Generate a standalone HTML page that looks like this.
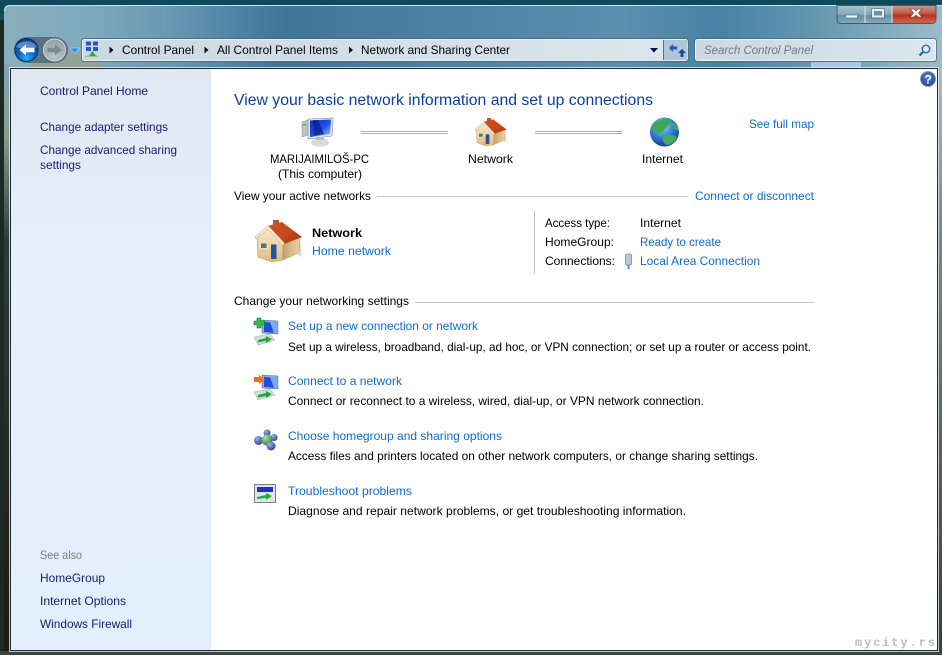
<!DOCTYPE html>
<html><head><meta charset="utf-8"><style>
html,body{margin:0;padding:0;background:#fff}
svg{display:block}
text{font-family:"Liberation Sans",sans-serif;font-size:12px;fill:#000;white-space:pre}
.l{fill:#0f6bd0}
.n{fill:#1a1a6e}
</style></head><body>
<svg width="942" height="655" viewBox="0 0 942 655" xmlns="http://www.w3.org/2000/svg">
<defs>
<linearGradient id="glass" x1="0" y1="0" x2="1" y2="0">
<stop offset="0" stop-color="#8aaebd"/><stop offset=".09" stop-color="#7fa9bf"/><stop offset=".17" stop-color="#6a9ab4"/><stop offset=".3" stop-color="#3f7498"/><stop offset=".36" stop-color="#46799b"/><stop offset=".5" stop-color="#4f83a3"/><stop offset=".66" stop-color="#5c8fac"/><stop offset=".76" stop-color="#4682a5"/><stop offset=".86" stop-color="#6396af"/><stop offset="1" stop-color="#9cbbc9"/>
</linearGradient>
<linearGradient id="leftb" x1="0" y1="0" x2="0" y2="1"><stop offset="0" stop-color="#7ea5b5"/><stop offset=".12" stop-color="#8c9c90"/><stop offset=".3" stop-color="#2c3c3c"/><stop offset="1" stop-color="#1c1a10"/></linearGradient>
<linearGradient id="rightb" x1="0" y1="0" x2="0" y2="1"><stop offset="0" stop-color="#a2becb"/><stop offset=".3" stop-color="#6c8a94"/><stop offset="1" stop-color="#3a3f3c"/></linearGradient>
<linearGradient id="addr" x1="0" y1="0" x2="1" y2="0"><stop offset="0" stop-color="#ccd9e2"/><stop offset="1" stop-color="#dbe6ed"/></linearGradient>
<linearGradient id="side" x1="0" y1="0" x2="0" y2="1"><stop offset="0" stop-color="#dfe8f3"/><stop offset=".3" stop-color="#e6eff9"/><stop offset="1" stop-color="#e3effc"/></linearGradient>
<linearGradient id="close" x1="0" y1="0" x2="0" y2="1"><stop offset="0" stop-color="#c9958a"/><stop offset=".4" stop-color="#c25f4e"/><stop offset=".55" stop-color="#b8321c"/><stop offset="1" stop-color="#d0694e"/></linearGradient>
<linearGradient id="capb" x1="0" y1="0" x2="0" y2="1"><stop offset="0" stop-color="#a8c2ce"/><stop offset=".5" stop-color="#86a8ba"/><stop offset=".55" stop-color="#648fa6"/><stop offset="1" stop-color="#86abbc"/></linearGradient>
<radialGradient id="back" cx=".5" cy=".85" r=".8"><stop offset="0" stop-color="#2bb0f4"/><stop offset=".5" stop-color="#0a5cc4"/><stop offset="1" stop-color="#123c94"/></radialGradient>
<radialGradient id="fwd" cx=".5" cy=".8" r=".75"><stop offset="0" stop-color="#b9c5c8"/><stop offset="1" stop-color="#93a4aa"/></radialGradient>
<radialGradient id="globe" cx=".42" cy=".3" r=".8"><stop offset="0" stop-color="#8fd4f6"/><stop offset=".55" stop-color="#2a74cc"/><stop offset="1" stop-color="#0c2a78"/></radialGradient>
<radialGradient id="help" cx=".5" cy=".35" r=".7"><stop offset="0" stop-color="#5c84c8"/><stop offset="1" stop-color="#1f3f90"/></radialGradient>
<radialGradient id="ball" cx=".35" cy=".3" r=".8"><stop offset="0" stop-color="#9db0ec"/><stop offset="1" stop-color="#27378f"/></radialGradient>
<radialGradient id="ballg" cx=".35" cy=".3" r=".8"><stop offset="0" stop-color="#a8e0a0"/><stop offset="1" stop-color="#1f7a4a"/></radialGradient>
<linearGradient id="wall" x1="0" y1="0" x2="0" y2="1"><stop offset="0" stop-color="#fbeccb"/><stop offset="1" stop-color="#e0bb85"/></linearGradient>
<linearGradient id="wall2" x1="0" y1="0" x2="1" y2="0"><stop offset="0" stop-color="#c9a26c"/><stop offset="1" stop-color="#ecd2a4"/></linearGradient>
<linearGradient id="roof" x1="0" y1="0" x2="1" y2="1"><stop offset="0" stop-color="#cf5024"/><stop offset=".5" stop-color="#c64a1e"/><stop offset="1" stop-color="#a83412"/></linearGradient>
<linearGradient id="scr" x1="0" y1="0" x2="1" y2="1"><stop offset="0" stop-color="#0b2fc0"/><stop offset=".55" stop-color="#1f52e0"/><stop offset="1" stop-color="#a9c4f4"/></linearGradient>
<g id="house">
<path d="M50 24 L52 40 L48 42Z" fill="#ddd"/>
<path d="M7 23 L18.500 12.500 L33 28 L33 45 L22 47 L8 42Z" fill="url(#wall)" stroke="#b58c58" stroke-width=".5"/>
<path d="M33 28 L50 23 L49 38 L33 45Z" fill="url(#wall2)" stroke="#b58c58" stroke-width=".4"/>
<rect x="23" y="5" width="6" height="5" fill="#a85a38"/>
<path d="M18 11 L32 7 L52 22 L34 29Z" fill="url(#roof)"/>
<path d="M5 22 L18 10.500 L34.500 28 L33 30.500 L18 14.500 L6 24Z" fill="#f4e8d0" stroke="#b89868" stroke-width=".4"/>
<rect x="10.500" y="28" width="6.500" height="5.500" fill="#5c6c7c" stroke="#f7f0e0" stroke-width=".8"/>
<rect x="21" y="29.500" width="5.500" height="14.500" fill="#23559c"/>
<rect x="21" y="44" width="6" height="2" fill="#e4c23c"/>
</g>
<g id="netcomp">
<path d="M9 2 L25 3 L25 16 L9 15Z" fill="#8ea8d8" stroke="#5c6c8c" stroke-width=".5"/>
<path d="M11 4 L24 5 L24 15 L11 14Z" fill="#1f4fd8"/>
<path d="M17 4 L24 5 L24 15 L21 15Z" fill="#7fa8ee"/>
<path d="M1 19 L17 16 L22 22 L5 27Z" fill="#d6dcdc" stroke="#8a9494" stroke-width=".4"/>
<path d="M5 22 L13 20 L13 18 L19 21 L13 25 L13 23 L5 24.500Z" fill="#1fa83f"/>
</g>
</defs>

<!-- outer background -->
<rect width="942" height="655" fill="#0f4a5c"/>
<!-- aero glass -->
<path d="M4 11 Q4 5 10 5 H942 V655 H4Z" fill="url(#glass)"/>
<rect x="0" y="20" width="4" height="635" fill="#1d2a24"/>
<rect x="4" y="64" width="6" height="591" fill="url(#leftb)"/>
<path d="M4.500 11 Q4.500 5.500 10 5.500 H942" fill="none" stroke="#d4e2e8" stroke-width="1"/>
<path d="M28 68 Q58 36 105 68Z" fill="#a09c78" opacity=".6"/>
<rect x="811" y="62" width="50" height="7" fill="#a6c8e6"/>
<rect x="0" y="651" width="942" height="4" fill="#3a4440"/>
<rect x="938" y="69" width="4" height="582" fill="url(#rightb)"/>

<!-- caption buttons -->
<path d="M837 5.500 H936 V19 Q936 23.500 931 23.500 H842 Q837 23.500 837 19Z" fill="url(#capb)" stroke="#3e5c6c" stroke-width="1"/>
<path d="M892 6 H935.500 V19 Q935.500 23 931 23 H892Z" fill="url(#close)"/>
<line x1="865" y1="6" x2="865" y2="23" stroke="#dfe9ee" stroke-width="1"/>
<line x1="892" y1="6" x2="892" y2="23" stroke="#dfe9ee" stroke-width="1"/>
<rect x="845.500" y="15" width="12" height="3" fill="#f4f6f8" stroke="#4c5e70" stroke-width=".6"/>
<rect x="873" y="10" width="10" height="6.500" fill="#6c8ea4" stroke="#e6ecf0" stroke-width="2"/>
<rect x="871.500" y="8.500" width="13" height="9.500" fill="none" stroke="#4a6274" stroke-width=".5"/>
<path d="M910 9 H914 L916 11 L918 9 H922 L918.500 13 L922 17 H918 L916 15 L914 17 H910 L913.500 13Z" fill="#f4f4f4" stroke="#6c3a34" stroke-width=".6"/>

<!-- nav buttons -->
<rect x="14" y="37" width="54" height="26" rx="13" fill="#4e6470" opacity=".8"/>
<circle cx="26.500" cy="50" r="11.500" fill="url(#back)" stroke="#0c2e6c" stroke-width="1"/>
<path d="M16 47 A11 8 0 0 1 37 47 Q27 51 16 47Z" fill="#b4d2f2" opacity=".45"/>
<path d="M19.500 50 L26 44.500 V47.800 H34.500 V52.200 H26 V55.500Z" fill="#fff"/>
<circle cx="54.500" cy="50" r="11" fill="url(#fwd)" stroke="#d0d8da" stroke-width="1"/>
<path d="M62 50 L55 44.500 V47.800 H47.500 V52.200 H55 V55.500Z" fill="#7d8b90"/>
<path d="M70 48 H79.500 L74.700 53Z" fill="#2d8fe4" stroke="#d8eaf6" stroke-width=".5"/>

<!-- address bar -->
<rect x="82.500" y="39.500" width="605" height="21" rx="2" fill="url(#addr)" stroke="#e8f0f4" stroke-width="1"/>
<rect x="81.500" y="38.500" width="607" height="23" rx="2.500" fill="none" stroke="#40667e" stroke-width=".7"/>
<rect x="664" y="40" width="23.500" height="20" fill="#adc6d5"/>
<line x1="663.500" y1="40" x2="663.500" y2="60" stroke="#5a7486" stroke-width="1"/>
<g fill="#2b55c2"><rect x="86" y="41.500" width="5" height="4"/><rect x="93" y="41.500" width="5" height="4"/><rect x="86" y="47" width="5" height="4"/><rect x="93" y="47" width="5" height="4"/></g>
<path d="M85 55.500 H99 V57 H85Z" fill="#9ac090"/><path d="M92.500 51 L96 56 H89Z" fill="#1faf4a"/>
<path d="M109.500 46.500 L113.500 50 L109.500 53.500Z" fill="#111"/>
<path d="M204.500 46.500 L208.500 50 L204.500 53.500Z" fill="#111"/>
<path d="M349 46.500 L353 50 L349 53.500Z" fill="#111"/>
<text x="122" y="54" textLength="72" lengthAdjust="spacingAndGlyphs">Control Panel</text>
<text x="217" y="54" textLength="121" lengthAdjust="spacingAndGlyphs">All Control Panel Items</text>
<text x="361" y="54" textLength="149" lengthAdjust="spacingAndGlyphs">Network and Sharing Center</text>
<path d="M650 48 H658 L654 52.500Z" fill="#0b0b50"/>
<path d="M669 48 L673 44 V46.500 H677 V49.500 H673 V52Z" fill="#2458b0"/>
<path d="M682 49 L686 53 H683.500 V57 H680.500 V53 H678Z" fill="#1a4aa8"/>
<!-- search -->
<rect x="695.500" y="39.500" width="240" height="21" rx="2" fill="url(#addr)" stroke="#edf3f6" stroke-width="1"/>
<rect x="694.500" y="38.500" width="242" height="23" rx="2.500" fill="none" stroke="#40667e" stroke-width=".7"/>
<text x="704" y="54" textLength="109" lengthAdjust="spacingAndGlyphs" style="font-style:italic;fill:#6e7b84">Search Control Panel</text>
<circle cx="926" cy="49" r="3.700" fill="#e6f0f8" stroke="#2472bc" stroke-width="1.500"/>
<line x1="923" y1="52" x2="919.500" y2="55.500" stroke="#1c5a9c" stroke-width="2"/>

<!-- client area -->
<rect x="9.500" y="67.500" width="929" height="584" fill="none" stroke="#f0f4f2" stroke-width="1" opacity=".75"/>
<rect x="10.500" y="68.500" width="927" height="582" fill="#fff" stroke="#1e2a2c" stroke-width="1"/>
<rect x="11" y="69" width="200" height="581" fill="url(#side)"/>

<!-- sidebar -->
<text class="n" x="40" y="95" textLength="108" lengthAdjust="spacingAndGlyphs">Control Panel Home</text>
<text class="n" x="40" y="131" textLength="128" lengthAdjust="spacingAndGlyphs">Change adapter settings</text>
<text class="n" x="40" y="154" textLength="137" lengthAdjust="spacingAndGlyphs">Change advanced sharing</text>
<text class="n" x="40" y="169" textLength="41" lengthAdjust="spacingAndGlyphs">settings</text>
<text x="40" y="559" textLength="42" lengthAdjust="spacingAndGlyphs" style="fill:#7d7d7d">See also</text>
<text class="n" x="40" y="582" textLength="65" lengthAdjust="spacingAndGlyphs">HomeGroup</text>
<text class="n" x="40" y="605" textLength="86" lengthAdjust="spacingAndGlyphs">Internet Options</text>
<text class="n" x="40" y="628" textLength="92" lengthAdjust="spacingAndGlyphs">Windows Firewall</text>

<!-- help -->
<circle cx="928" cy="79" r="7.500" fill="url(#help)" stroke="#8a9cb8" stroke-width="1"/>
<text x="924.500" y="83.500" style="font-size:12px;font-weight:bold;fill:#fff">?</text>

<!-- main -->
<text x="234" y="105" textLength="419" lengthAdjust="spacingAndGlyphs" style="font-size:16px;fill:#0a3ea6">View your basic network information and set up connections</text>
<text class="l" x="749" y="128" textLength="65" lengthAdjust="spacingAndGlyphs">See full map</text>

<!-- computer icon -->
<g>
<path d="M302 122 L308 120 V135 L302 137Z" fill="#bcc5ca" stroke="#858e94" stroke-width=".5"/>
<rect x="303" y="124" width="3" height="1.500" fill="#4caf50"/>
<path d="M308 119 L333 118 L332 136 L308 139Z" fill="#dfe7ee" stroke="#7c8a98" stroke-width=".6"/>
<path d="M310 120.500 L331 119.500 L330 134 L310 137Z" fill="url(#scr)"/>
<path d="M313 120 L318 120 L324 134 L314 135.500Z" fill="#0a1f96" opacity=".75"/>
<ellipse cx="320" cy="142.500" rx="9" ry="4" fill="#d8dbde"/>
<rect x="316" y="137" width="8" height="3" fill="#b8bec4"/>
</g>
<!-- connectors -->
<g stroke-width="1"><line x1="361" y1="131.500" x2="448" y2="131.500" stroke="#9ab4d0"/><line x1="361" y1="133.500" x2="448" y2="133.500" stroke="#9ab4d0"/><line x1="535" y1="131.500" x2="622" y2="131.500" stroke="#9ab4d0"/><line x1="535" y1="133.500" x2="622" y2="133.500" stroke="#9ab4d0"/></g>
<use href="#house" transform="translate(471.600,114.600) scale(.67)"/>
<!-- globe -->
<circle cx="664.500" cy="132" r="14.500" fill="url(#globe)"/>
<path d="M651 128 Q656 119 667 119 Q673 122 667 126 Q664 133 658 133 Q653 132 651 128Z" fill="#3ea858"/>
<path d="M662 137 Q671 133 677 137 Q674 145 666 145 Q662 141 662 137Z" fill="#43a860"/>
<path d="M673 122 Q678 126 679 131 Q674 130 672 125Z" fill="#43a860"/>
<text x="270" y="163" textLength="99" lengthAdjust="spacingAndGlyphs">MARIJAIMILOŠ-PC</text>
<text x="278" y="178" textLength="84" lengthAdjust="spacingAndGlyphs">(This computer)</text>
<text x="468" y="163" textLength="45" lengthAdjust="spacingAndGlyphs">Network</text>
<text x="642" y="163" textLength="41" lengthAdjust="spacingAndGlyphs">Internet</text>

<text x="234" y="200" textLength="137" lengthAdjust="spacingAndGlyphs">View your active networks</text>
<line x1="377" y1="196.500" x2="688" y2="196.500" stroke="#c8c8c8"/>
<text class="l" x="695" y="200" textLength="119" lengthAdjust="spacingAndGlyphs">Connect or disconnect</text>

<use href="#house" transform="translate(250,215)"/>
<text x="312" y="237" textLength="50" lengthAdjust="spacingAndGlyphs" style="font-weight:bold">Network</text>
<text class="l" x="312" y="255" textLength="79" lengthAdjust="spacingAndGlyphs">Home network</text>
<line x1="534.500" y1="211" x2="534.500" y2="274" stroke="#bfbfbf"/>
<text x="545" y="227" textLength="65" lengthAdjust="spacingAndGlyphs">Access type:</text>
<text x="640" y="227" textLength="41" lengthAdjust="spacingAndGlyphs">Internet</text>
<text x="545" y="246" textLength="69" lengthAdjust="spacingAndGlyphs">HomeGroup:</text>
<text class="l" x="640" y="246" textLength="81" lengthAdjust="spacingAndGlyphs">Ready to create</text>
<text x="545" y="265" textLength="70" lengthAdjust="spacingAndGlyphs">Connections:</text>
<rect x="625.500" y="254" width="6" height="11" rx="1.500" fill="#bcc7d2" stroke="#7c8a9c" stroke-width=".8"/>
<rect x="627.500" y="265" width="2" height="4" fill="#3c8ed8"/>
<text class="l" x="640" y="265" textLength="120" lengthAdjust="spacingAndGlyphs">Local Area Connection</text>

<text x="234" y="305" textLength="175" lengthAdjust="spacingAndGlyphs">Change your networking settings</text>
<line x1="415" y1="302.500" x2="814" y2="302.500" stroke="#c8c8c8"/>

<!-- task icons -->
<use href="#netcomp" transform="translate(253,318)"/>
<path d="M257 318 H261 V321 H264.500 V325 H261 V328 H257 V325 H254 V321 H257Z" fill="#35b94a" stroke="#127a2a" stroke-width=".6"/>
<use href="#netcomp" transform="translate(253,373)"/>
<path d="M254 377 H259 V375 L265 379.500 L259 384 V382 H254Z" fill="#f07020"/>
<g>
<line x1="258" y1="441" x2="272" y2="437" stroke="#889" stroke-width="1"/><line x1="265" y1="436" x2="271" y2="445" stroke="#889" stroke-width="1"/>
<circle cx="258.500" cy="440.500" r="4.500" fill="url(#ball)"/>
<circle cx="267" cy="433" r="3.500" fill="url(#ball)"/>
<circle cx="274" cy="437.500" r="3.500" fill="url(#ball)"/>
<circle cx="267" cy="440" r="5.500" fill="url(#ballg)"/>
<circle cx="271" cy="446" r="4.500" fill="url(#ball)"/>
</g>
<g>
<rect x="254.500" y="484.500" width="21" height="18" fill="#e0e5e8" stroke="#7a8084" stroke-width="1"/>
<rect x="257" y="487" width="16" height="5" fill="#1638c8"/>
<path d="M257 497 L266 495 V493 L272 496 L266 500 V498 L257 499Z" fill="#20aa44"/>
</g>

<text class="l" x="288" y="330" textLength="190" lengthAdjust="spacingAndGlyphs">Set up a new connection or network</text>
<text x="288" y="351" textLength="523" lengthAdjust="spacingAndGlyphs">Set up a wireless, broadband, dial-up, ad hoc, or VPN connection; or set up a router or access point.</text>
<text class="l" x="288" y="385" textLength="114" lengthAdjust="spacingAndGlyphs">Connect to a network</text>
<text x="288" y="405" textLength="416" lengthAdjust="spacingAndGlyphs">Connect or reconnect to a wireless, wired, dial-up, or VPN network connection.</text>
<text class="l" x="288" y="440" textLength="214" lengthAdjust="spacingAndGlyphs">Choose homegroup and sharing options</text>
<text x="288" y="460" textLength="470" lengthAdjust="spacingAndGlyphs">Access files and printers located on other network computers, or change sharing settings.</text>
<text class="l" x="288" y="495" textLength="124" lengthAdjust="spacingAndGlyphs">Troubleshoot problems</text>
<text x="288" y="515" textLength="398" lengthAdjust="spacingAndGlyphs">Diagnose and repair network problems, or get troubleshooting information.</text>

<text x="855" y="646" textLength="80" style="font-family:'Liberation Mono',monospace;font-size:12px;font-weight:bold;fill:#bcbcbc">mycity.rs</text>
</svg>
</body></html>
